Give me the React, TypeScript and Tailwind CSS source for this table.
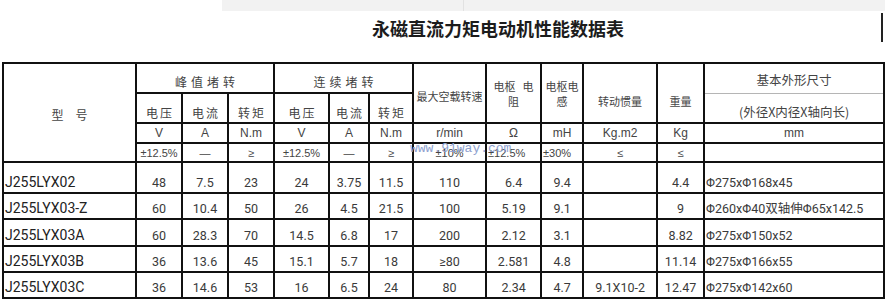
import React from 'react';

const rows = [
  { model: 'J255LYX02', v: ['48', '7.5', '23', '24', '3.75', '11.5', '110', '6.4', '9.4', '', '4.4'], dim: 'Φ275xΦ168x45', h: 'h-[31px]' },
  { model: 'J255LYX03-Z', v: ['60', '10.4', '50', '26', '4.5', '21.5', '100', '5.19', '9.1', '', '9'], dim: 'Φ260xΦ40双轴伸Φ65x142.5', h: 'h-[26px]' },
  { model: 'J255LYX03A', v: ['60', '28.3', '70', '14.5', '6.8', '17', '200', '2.12', '3.1', '', '8.82'], dim: 'Φ275xΦ150x52', h: 'h-[27px]' },
  { model: 'J255LYX03B', v: ['36', '13.6', '45', '15.1', '5.7', '18', '≥80', '2.581', '4.8', '', '11.14'], dim: 'Φ275xΦ166x55', h: 'h-[26px]' },
  { model: 'J255LYX03C', v: ['36', '14.6', '53', '16', '6.5', '24', '80', '2.34', '4.7', '9.1X10-2', '12.47'], dim: 'Φ275xΦ142x60', h: 'h-[26px]' },
];

const units = ['V', 'A', 'N.m', 'V', 'A', 'N.m', 'r/min', 'Ω', 'mH', 'Kg.m2', 'Kg', 'mm'];

const cell = 'border-2 border-[#111] p-0 text-center';
const latin = "font-['Liberation_Sans','Noto_Sans_CJK_SC',sans-serif]";

export default function App() {
  return (
    <div className="relative w-[885px] h-[300px] overflow-hidden bg-white font-['Liberation_Sans','Noto_Sans_CJK_SC',sans-serif] text-[#3a3a3a]">
      {/* faded strip at the very top */}
      <div className="ml-[222px] h-[11px] bg-[#f2f2f2] flex">
        <div className="ml-[241px] w-px bg-[#e2e2e2]" />
      </div>

      <div className="flex h-[51px]">
        <h1 className="ml-[372px] mt-[6px] text-[18px] leading-[22px] font-bold text-[#1c1c1c] font-['Noto_Sans_CJK_SC',sans-serif]">
          永磁直流力矩电动机性能数据表
        </h1>
        <div className="ml-auto mr-[2px] mt-[2px] w-[2px] h-[29px] bg-[#222]" />
      </div>

      <table className="ml-[2px] w-[881px] table-fixed border-collapse">
        <colgroup>
          <col className="w-[133px]" />
          <col className="w-[46px]" />
          <col className="w-[46px]" />
          <col className="w-[46px]" />
          <col className="w-[55px]" />
          <col className="w-[40px]" />
          <col className="w-[44px]" />
          <col className="w-[73px]" />
          <col className="w-[55px]" />
          <col className="w-[42px]" />
          <col className="w-[74px]" />
          <col className="w-[47px]" />
          <col className="w-[180px]" />
        </colgroup>
        <thead className="font-['Noto_Sans_CJK_SC',sans-serif] font-normal text-[#444]">
          <tr className="h-[30px]">
            <th rowSpan={4} className={`${cell} font-normal text-[12px] pt-[4px]`}>
              型<span className="inline-block w-[12px]" />号
            </th>
            <th colSpan={3} className={`${cell} font-normal text-[12px] align-bottom pb-[1px] tracking-[4px] pl-[4px]`}>峰值堵转</th>
            <th colSpan={3} className={`${cell} font-normal text-[12px] align-bottom pb-[1px] tracking-[4px] pl-[4px]`}>连续堵转</th>
            <th rowSpan={2} className={`${cell} font-normal text-[11px] pt-[6px]`}>最大空载转速</th>
            <th rowSpan={2} className={`${cell} font-normal text-[11px] leading-[15px] pt-[2px]`}>
              电枢<span className="inline-block w-[7px]" />电<br />阻
            </th>
            <th rowSpan={2} className={`${cell} font-normal text-[11px] leading-[15px] pt-[2px]`}>
              电枢电<br />感
            </th>
            <th rowSpan={2} className={`${cell} font-normal text-[11px] pt-[16px]`}>转动惯量</th>
            <th rowSpan={2} className={`${cell} font-normal text-[11px] pt-[16px]`}>重量</th>
            <th className={`${cell} border-b-[1px] border-b-[#b5b5b5] font-normal text-[12.5px] align-bottom pb-[3px]`}>基本外形尺寸</th>
          </tr>
          <tr className="h-[30px]">
            {['电压', '电流', '转矩', '电压', '电流', '转矩'].map((t, i) => (
              <th key={i} className={`${cell} font-normal text-[12px] align-bottom pb-[0px] tracking-[2px] pl-[2px]`}>{t}</th>
            ))}
            <th className={`${cell} border-t-[1px] border-t-[#b5b5b5] font-normal text-[12.5px] align-bottom pb-[0px]`}>(外径X内径X轴向长)</th>
          </tr>
          <tr className="h-[20px]">
            {units.map((u, i) => (
              <th key={i} className={`${cell} font-normal text-[12px] leading-[16px] ${latin}`}>{u}</th>
            ))}
          </tr>
          <tr className="h-[19px]">
            {['±12.5%', '—', '≥', '±12.5%', '—', '≥', '±10%'].map((t, i) => (
              <th key={i} className={`${cell} font-normal text-[11px] leading-[15px] pt-[1px] ${latin}`}>{t}</th>
            ))}
            <th className={`${cell} text-left pl-[1px] font-normal text-[11px] leading-[15px] pt-[1px] ${latin}`}>±12.5%</th>
            <th className={`${cell} text-left pl-[1px] font-normal text-[11px] leading-[15px] pt-[1px] ${latin}`}>±30%</th>
            <th className={`${cell} font-normal text-[11px] leading-[15px] pt-[1px] ${latin}`}>≤</th>
            <th className={`${cell} font-normal text-[11px] leading-[15px] pt-[1px] ${latin}`}>≤</th>
            <th className={cell} />
          </tr>
        </thead>
        <tbody className="font-['Roboto','Noto_Sans_CJK_SC',sans-serif]">
          {rows.map((r) => (
            <tr key={r.model} className={r.h}>
              <td className={`${cell} text-left pl-[1px] align-bottom pb-[1px] text-[14px] leading-[18px] text-[#222]`}>{r.model}</td>
              {r.v.map((x, i) => (
                <td key={i} className={`${cell} align-bottom pb-[1px] text-[12.5px] leading-[16px]`}>{x}</td>
              ))}
              <td className={`${cell} text-left pl-[1px] align-bottom pb-[1px] text-[12.5px] leading-[16px] whitespace-nowrap`}>{r.dim}</td>
            </tr>
          ))}
        </tbody>
      </table>

      {/* watermark */}
      <div className="absolute left-[410px] top-[141px] text-[13px] leading-[16px] text-[#8ea1cf] font-['Liberation_Mono',monospace]">
        www.91way.com
      </div>
    </div>
  );
}
